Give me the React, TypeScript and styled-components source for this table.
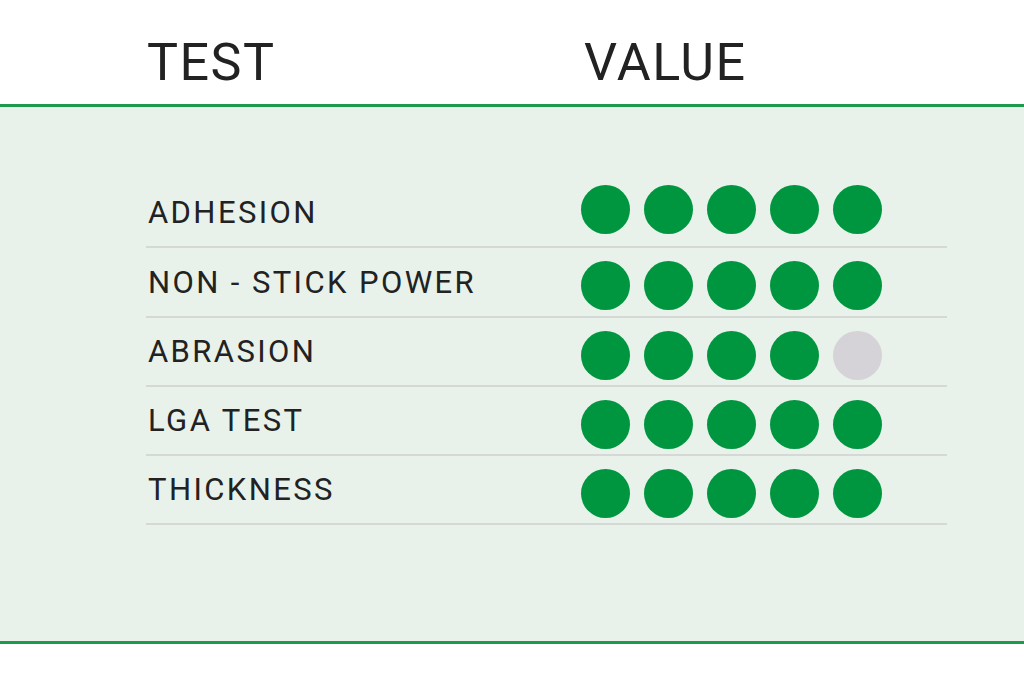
import React from "react";
import styled, { createGlobalStyle } from "styled-components";

const Global = createGlobalStyle`
  html, body { margin: 0; padding: 0; background: #ffffff; }
  body { font-family: Roboto, "Liberation Sans", Arial, sans-serif; }
`;

const Page = styled.div`
  width: 1024px;
  height: 682px;
  background: #ffffff;
  overflow: hidden;
`;

const Header = styled.header`
  box-sizing: border-box;
  height: 104px;
  padding: 37px 0 0 147px;
  display: grid;
  grid-template-columns: 437px 1fr;
`;

const HeadCell = styled.div`
  font-size: 52px;
  line-height: 1;
  letter-spacing: 1.5px;
  color: #222222;
  font-weight: 400;
`;

const Panel = styled.section`
  box-sizing: border-box;
  height: 540px;
  border-top: 3px solid #1e9a4c;
  border-bottom: 3px solid #1e9a4c;
  background: #e9f2ea;
  padding: 72px 0 0 146px;
`;

const Table = styled.div`
  width: 801px;
  display: flex;
  flex-direction: column;
`;

const Row = styled.div`
  display: grid;
  grid-template-columns: 435px 1fr;
  height: 67.25px;
  border-bottom: 2px solid #d4d9d6;
`;

const Label = styled.div`
  align-self: end;
  margin: 0 0 18px 2px;
  font-size: 31px;
  line-height: 1;
  letter-spacing: 2.4px;
  color: #222222;
  white-space: nowrap;
`;

const Dots = styled.div<{ $first?: boolean }>`
  align-self: start;
  margin-top: ${(p) => (p.$first ? 6 : 13)}px;
  display: flex;
  gap: 14px;
`;

const Dot = styled.span<{ $on: boolean }>`
  width: 49px;
  height: 49px;
  border-radius: 50%;
  background: ${(p) => (p.$on ? "#009640" : "#d5d2d8")};
`;

const rows = [
  { name: "ADHESION", value: 5 },
  { name: "NON - STICK POWER", value: 5 },
  { name: "ABRASION", value: 4 },
  { name: "LGA TEST", value: 5 },
  { name: "THICKNESS", value: 5 },
];

export default function App() {
  return (
    <Page>
      <Global />
      <Header>
        <HeadCell>TEST</HeadCell>
        <HeadCell>VALUE</HeadCell>
      </Header>
      <Panel>
        <Table>
          {rows.map((r, i) => (
            <Row key={r.name}>
              <Label>{r.name}</Label>
              <Dots $first={i === 0}>
                {[0, 1, 2, 3, 4].map((k) => (
                  <Dot key={k} $on={k < r.value} />
                ))}
              </Dots>
            </Row>
          ))}
        </Table>
      </Panel>
    </Page>
  );
}
